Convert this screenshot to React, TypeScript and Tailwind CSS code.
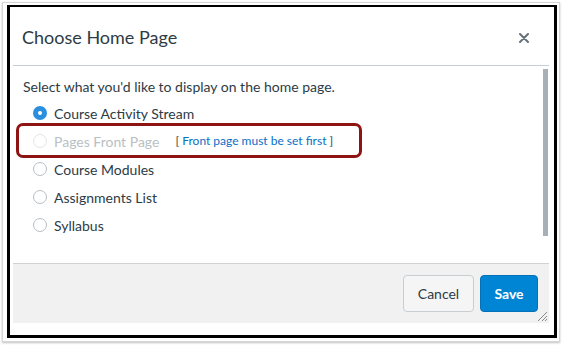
import React from "react";

const font = { fontFamily: "Lato, 'Open Sans', sans-serif" };

function Radio({ state }: { state: "checked" | "off" | "disabled" }) {
  if (state === "checked") {
    return (
      <span className="w-[14px] h-[14px] rounded-full bg-[#2b8fe0] flex items-center justify-center shrink-0">
        <span className="w-[4px] h-[4px] rounded-full bg-white" />
      </span>
    );
  }
  return (
    <span
      className={
        "w-[14px] h-[14px] rounded-full bg-white border shrink-0 " +
        (state === "disabled" ? "border-[#e3e5e7]" : "border-[#b8bec3]")
      }
    />
  );
}

function Row({
  label,
  state,
  extra,
}: {
  label: string;
  state: "checked" | "off" | "disabled";
  extra?: React.ReactNode;
}) {
  return (
    <div className="flex items-center h-[28px]">
      <Radio state={state} />
      <span
        className={
          "ml-[7px] text-[14px] " +
          (state === "disabled" ? "text-[#b9bfc4]" : "text-[#2d3b45]")
        }
      >
        {label}
      </span>
      {extra}
    </div>
  );
}

export default function App() {
  return (
    <div className="w-[562px] h-[345px] bg-white p-[2px]" style={font}>
      <div className="w-[558px] h-[340px] border border-[#d6d6d6] shadow-[0_1px_2px_rgba(0,0,0,0.25)] pl-[4px] pt-[2px]">
        <div className="w-[550px] h-[333px] border-l-[3px] border-r-[3px] border-b-[3px] border-t-[2px] border-black bg-white pl-[3px] flex flex-col">
          <div className="w-[536px] flex flex-col h-[316px]">
            {/* header */}
            <div className="h-[59px] flex items-center justify-between pl-[9px] pr-[20px] border-b border-[#c7cdd1] pt-[3px]">
              <span className="text-[18px] text-[#2d3b45]">Choose Home Page</span>
              <svg width="10" height="10" viewBox="0 0 10 10" className="mt-[1px]">
                <path d="M1 1 L9 9 M9 1 L1 9" stroke="#66717a" strokeWidth="2" strokeLinecap="round" />
              </svg>
            </div>
            {/* body */}
            <div className="flex-1 flex relative">
              <div className="flex-1 pl-[10px] pt-[9px]">
                <div className="text-[14px] text-[#2d3b45] h-[22px] flex items-center">
                  Select what you'd like to display on the home page.
                </div>
                <div className="pl-[10px] pt-[2px]">
                  <Row label="Course Activity Stream" state="checked" />
                  <div className="relative">
                    <div className="absolute left-[-17px] top-[-4px] w-[346px] h-[35px] border-[3px] border-[#8e1414] rounded-[7px]" />
                    <Row
                      label="Pages Front Page"
                      state="disabled"
                      extra={
                        <span className="ml-[16px] text-[12px] text-[#2d3b45]">
                          [ <span className="text-[#0770c4]">Front page must be set first</span> ]
                        </span>
                      }
                    />
                  </div>
                  <Row label="Course Modules" state="off" />
                  <Row label="Assignments List" state="off" />
                  <Row label="Syllabus" state="off" />
                </div>
              </div>
              <div className="w-[5px] mr-[1px] mt-[3px] h-[167px] bg-[#a8b0b6]" />
            </div>
            {/* footer */}
            <div className="h-[60px] bg-[#f1f1f1] border-t border-[#cfd3d6] flex items-center justify-end pr-[11px] relative">
              <button className="h-[37px] w-[71px] rounded-[4px] border border-[#c7cdd1] bg-[#f5f5f5] text-[#2d3b45] text-[14px] mr-[6px]" style={font}>
                Cancel
              </button>
              <button className="h-[37px] w-[58px] rounded-[4px] border border-[#0670b8] bg-[#0084d4] text-white text-[14px] font-bold" style={font}>
                Save
              </button>
              <svg width="12" height="12" viewBox="0 0 12 12" className="absolute right-[1px] bottom-[1px]">
                <path d="M11 2 L2 11 M11 6 L6 11 M11 9 L9 11" stroke="#8a8a8a" strokeWidth="1" />
              </svg>
            </div>
          </div>
        </div>
      </div>
    </div>
  );
}
